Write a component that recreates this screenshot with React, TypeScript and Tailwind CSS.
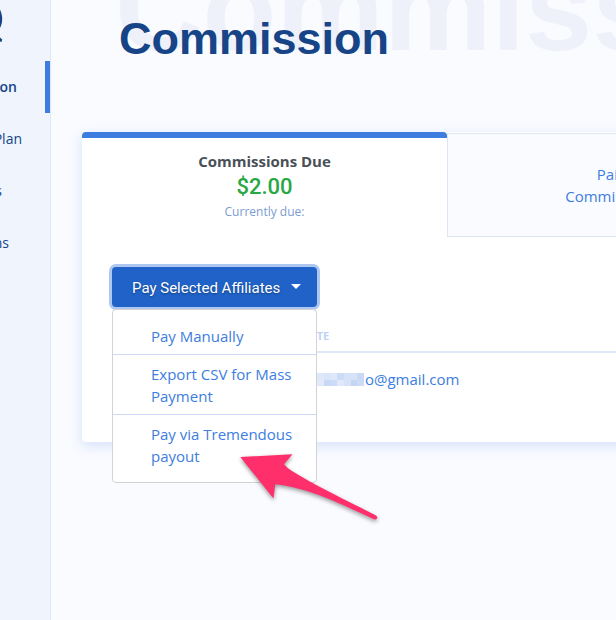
const navItems = [
  { label: "on", active: true, pad: "pr-[33px]" },
  { label: "Plan", active: false, pad: "pr-7" },
  { label: "s", active: false, pad: "pr-12" },
  { label: "ns", active: false, pad: "pr-[41px]" },
];

const mosaic = [
  "bg-[#dde8f8]", "bg-[#d9e5f8]", "bg-[#dde8f8]", "bg-[#cddcf6]", "bg-[#d5e2f7]", "bg-[#d5e2f7]", "bg-[#c9d9f5]",
  "bg-[#e0eaf9]", "bg-[#c9d9f5]", "bg-[#cddcf6]", "bg-[#dfe9f9]", "bg-[#d5e2f7]", "bg-[#c5d5f4]", "bg-[#cddcf6]",
];

const menuItems = ["Pay Manually", "Export CSV for Mass Payment", "Pay via Tremendous payout"];

function Sidebar() {
  return (
    <aside className="w-[51px] shrink-0 overflow-hidden border-r border-[#dce8f9] bg-[#eff4fd]">
      <div className="h-[61px]">
        <svg width="12" height="61" viewBox="0 0 12 61" aria-hidden="true">
          <path d="M0 9.500C1.500 13 2.200 16 2.200 19C2.200 22 1.500 25 0 28Z" fill="#164487" />
          <path d="M0 37.500L2.200 39.500L1.500 42L0 41.500Z" fill="#164487" />
        </svg>
      </div>
      <nav aria-label="Main">
        <ul>
          {navItems.map((item) => (
            <li key={item.label}>
              <a
                href="#"
                className={`flex h-[52px] items-center justify-end pb-0.5 text-[14px] text-[#164487] ${item.pad} ${
                  item.active ? "bg-[linear-gradient(#3d7de0,#3d7de0)] bg-[length:5px_100%] bg-right bg-no-repeat font-semibold" : ""
                }`}
              >
                {item.label}
              </a>
            </li>
          ))}
        </ul>
      </nav>
    </aside>
  );
}

function PayMenu() {
  return (
    <div className="relative w-[205px]">
      <button
        type="button"
        aria-haspopup="menu"
        aria-expanded="true"
        className="flex h-10 w-full items-center justify-between rounded-sm bg-[#2062c7] pt-0.5 pr-4 pl-5 font-[Roboto,sans-serif] text-[15px] text-white ring-3 ring-[#adc7f2] [text-shadow:0_1px_2px_rgba(0,0,0,0.35)]"
      >
        Pay Selected Affiliates
        <span className="mb-1 border-x-5 border-t-5 border-x-transparent border-t-white" />
      </button>
      <ul
        role="menu"
        className="absolute top-[42px] left-0 z-10 w-full rounded border border-[#d3d3d6] bg-white pt-1.5 pb-2 text-[15px] leading-[22px] text-[#3d7de0]"
      >
        {menuItems.map((item) => (
          <li key={item} role="none" className="border-b border-[#d0d7f4] pt-2 pr-5 pb-[7px] pl-[38px] first:pt-[9px] last:border-b-0">
            <a href="#" role="menuitem" className="block">
              {item}
            </a>
          </li>
        ))}
      </ul>
    </div>
  );
}

function AffiliateTable() {
  return (
    <table className="mt-[17px] w-full border-collapse text-left">
      <thead>
        <tr className="border-b-2 border-[#dde8f9]">
          <th className="h-7 pb-0.5 pl-[164px] text-[11px] font-bold text-[#bdd2f4]">AFFILIATE</th>
        </tr>
      </thead>
      <tbody>
        <tr>
          <td className="h-[54px] pl-[205px] text-[15px] text-[#3d7de0]">
            <span className="flex items-center">
              <span className="mr-px grid h-[13px] w-[47px] grid-cols-7" aria-hidden="true">
                {mosaic.map((tone, i) => (
                  <span key={i} className={tone} />
                ))}
              </span>
              o@gmail.com
            </span>
          </td>
        </tr>
      </tbody>
    </table>
  );
}

function Arrow() {
  return (
    <svg
      className="pointer-events-none absolute top-[445px] left-[230px] z-20 drop-shadow-[0_2px_2px_rgba(0,0,0,0.4)]"
      width="160"
      height="85"
      viewBox="230 445 160 85"
      aria-hidden="true"
    >
      <path
        d="M240.300 457L292.500 454.200L284 464.300Q287 468 292 471C316 486 344 499 375.500 515.200Q378 516.500 377 518.500Q376 520 374 519.300C345 506 310 488 275.300 484.300L273.500 498.500Z"
        fill="#ff2f6c"
      />
    </svg>
  );
}

export default function App() {
  return (
    <div className="relative flex min-h-screen overflow-hidden bg-[#fafbff] font-['Open_Sans','Noto_Sans',sans-serif]">
      <Sidebar />
      <main className="min-w-0 flex-1 overflow-hidden pl-[31px]">
        <header className="relative h-[132px] pt-[13px] pl-[37px] font-['Liberation_Sans',Arial,sans-serif] font-bold">
          <span aria-hidden="true" className="absolute -top-[52px] left-[33px] text-[121px] leading-none text-[#eef1f9]">
            Commission
          </span>
          <h1 className="relative text-[45px] leading-[52px] text-[#164487]">Commission</h1>
        </header>
        <section className="w-[695px] rounded bg-white pb-9 shadow-[0_4px_14px_rgba(61,125,224,0.2)]">
          <div role="tablist" className="flex h-[105px] text-center">
            <button
              type="button"
              role="tab"
              aria-selected="true"
              className="flex w-[365px] flex-col items-center rounded-t border-t-6 border-[#3d7de0] pt-3"
            >
              <span className="text-[15px] leading-[22px] font-bold text-[#495057]">Commissions Due</span>
              <span className="pt-px font-[Roboto,sans-serif] text-[22px] leading-7 font-medium text-[#28a745]">$2.00</span>
              <span className="text-[12px] leading-[22px] text-[#7b9bd0]">Currently due:</span>
            </button>
            <button
              type="button"
              role="tab"
              aria-selected="false"
              className="mt-px flex w-[330px] flex-col items-center justify-center border border-[#dee6f2] bg-[#fafbff] text-[15px] leading-[22px] text-[#3d7de0]"
            >
              <span>Paid</span>
              <span>Commissions</span>
            </button>
          </div>
          <div className="px-[30px] pt-[30px]">
            <PayMenu />
            <AffiliateTable />
          </div>
        </section>
      </main>
      <Arrow />
    </div>
  );
}
